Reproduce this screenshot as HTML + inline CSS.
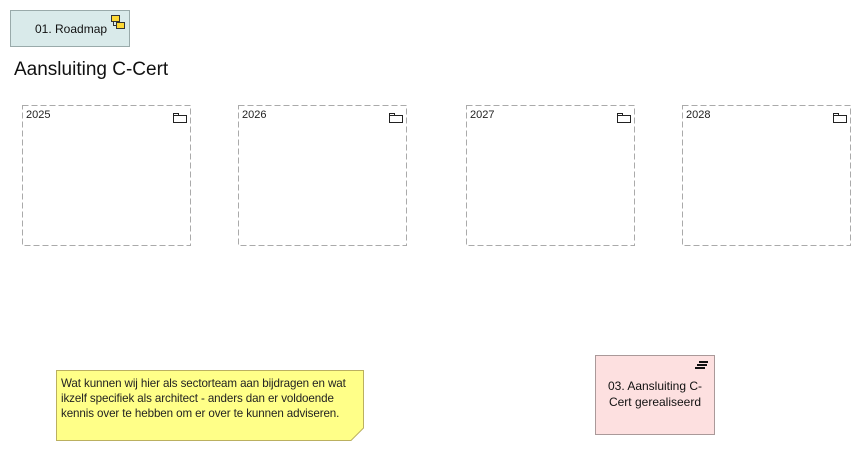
<!DOCTYPE html>
<html><head><meta charset="utf-8"><style>
body{margin:0;width:861px;height:451px;background:#fff;font-family:"Liberation Sans",sans-serif;position:relative;overflow:hidden}
.a{position:absolute;box-sizing:border-box}
.f{width:169px;height:141px;top:105px;font-size:11px;color:#222}
.f>svg.b{position:absolute;left:0;top:0}
.f span{position:absolute;left:4px;top:4px}
.f svg.i{position:absolute;right:4px;top:7px}
</style></head><body>
<div class="a" style="left:10px;top:10px;width:120px;height:37px;background:#d9eaea;border:1px solid #9aa;font-size:12px;color:#111">
<span style="position:absolute;left:24px;top:11px">01. Roadmap</span>
<svg style="position:absolute;left:100px;top:4px" width="14" height="15"><rect x="0.5" y="0.5" width="8" height="6" fill="#fdd835" stroke="#333"/><rect x="5.5" y="7.5" width="8" height="6" fill="#fdd835" stroke="#333"/><path d="M2.5 6.5V10.5H5.5" fill="none" stroke="#333"/></svg>
</div>
<div class="a" style="left:14px;top:59px;font-size:19px;color:#111">Aansluiting C-Cert</div>
<div class="a f" style="left:22px"><svg class="b" width="169" height="141"><rect x="0.5" y="0.5" width="168" height="140" fill="none" stroke="#aaa" stroke-dasharray="6,3"/></svg><span>2025</span><svg class="i" width="14" height="11"><path d="M0.5 1.5H5.5V3.5H13.5V10.5H0.5Z M0.5 3.5H5.5" fill="none" stroke="#222"/></svg></div>
<div class="a f" style="left:238px"><svg class="b" width="169" height="141"><rect x="0.5" y="0.5" width="168" height="140" fill="none" stroke="#aaa" stroke-dasharray="6,3"/></svg><span>2026</span><svg class="i" width="14" height="11"><path d="M0.5 1.5H5.5V3.5H13.5V10.5H0.5Z M0.5 3.5H5.5" fill="none" stroke="#222"/></svg></div>
<div class="a f" style="left:466px"><svg class="b" width="169" height="141"><rect x="0.5" y="0.5" width="168" height="140" fill="none" stroke="#aaa" stroke-dasharray="6,3"/></svg><span>2027</span><svg class="i" width="14" height="11"><path d="M0.5 1.5H5.5V3.5H13.5V10.5H0.5Z M0.5 3.5H5.5" fill="none" stroke="#222"/></svg></div>
<div class="a f" style="left:682px"><svg class="b" width="169" height="141"><rect x="0.5" y="0.5" width="168" height="140" fill="none" stroke="#aaa" stroke-dasharray="6,3"/></svg><span>2028</span><svg class="i" width="14" height="11"><path d="M0.5 1.5H5.5V3.5H13.5V10.5H0.5Z M0.5 3.5H5.5" fill="none" stroke="#222"/></svg></div>
<svg class="a" style="left:56px;top:370px" width="308" height="71"><path d="M0.5 0.5H307.5V58L295 70.5H0.5Z" fill="#ffff88" stroke="#bbb060"/></svg>
<div class="a" style="left:61px;top:376px;white-space:nowrap;font-size:11.6px;line-height:15px;color:#222;letter-spacing:-0.1px">Wat kunnen wij hier als sectorteam aan bijdragen en wat<br>ikzelf specifiek als architect - anders dan er voldoende<br>kennis over te hebben om er over te kunnen adviseren.</div>
<div class="a" style="left:595px;top:355px;width:120px;height:80px;background:#fde0e0;border:1px solid #aa9999;font-size:12px;line-height:16px;color:#111;text-align:center;padding-top:22px">03. Aansluiting C-<br>Cert gerealiseerd
<svg style="position:absolute;right:5px;top:5px" width="14" height="9"><path d="M4 1H13M2 4H12M0 7H10" stroke="#111" stroke-width="2"/></svg>
</div>
</body></html>
